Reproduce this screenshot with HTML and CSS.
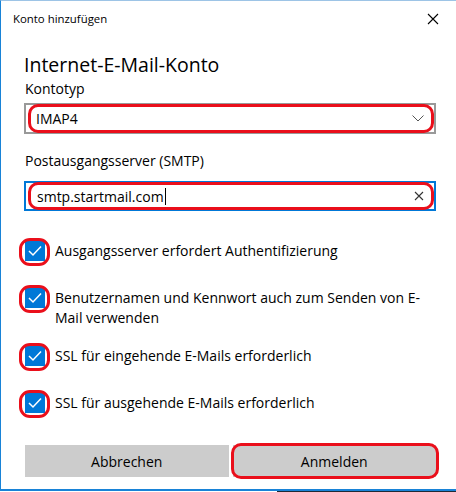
FILE: index.html
```html
<!DOCTYPE html>
<html lang="de">
<head>
  <meta charset="UTF-8">
  <title>Konto hinzufügen</title>
  <link rel="stylesheet" href="styles.css">
</head>
<body>

<div class="fenster">
  <header class="titelleiste">
    <span class="titel">Konto hinzufügen</span>
    <svg class="schliessen" width="12" height="12" viewBox="0 0 12 12">
      <path d="M1 1 L11 11 M11 1 L1 11" stroke="#000" stroke-width="1.1" fill="none"/>
    </svg>
  </header>

  <main class="inhalt">
    <h1>Internet-E-Mail-Konto</h1>
    <p class="label label-erst">Kontotyp</p>
    <div class="auswahl markiert">
      <span>IMAP4</span>
      <svg width="12" height="7" viewBox="0 0 12 7">
        <path d="M0.5 0.5 L6 6 L11.5 0.5" stroke="#555" stroke-width="1" fill="none"/>
      </svg>
    </div>

    <p class="label">Postausgangsserver (SMTP)</p>
    <div class="eingabe markiert">
      <span class="wert">smtp.startmail.com</span><span class="cursor"></span>
      <svg class="leeren" width="10" height="10" viewBox="0 0 10 10">
        <path d="M1 1 L9 9 M9 1 L1 9" stroke="#333" stroke-width="1.1" fill="none"/>
      </svg>
    </div>

    <div class="optionen">
      <div class="option">
        <span class="box markiert"><svg width="20" height="20" viewBox="0 0 20 20"><path d="M4 10 L8 14 L16 5.5" stroke="#fff" stroke-width="1.5" fill="none"/></svg></span>
        <span>Ausgangsserver erfordert Authentifizierung</span>
      </div>
      <div class="option zweizeilig">
        <span class="box markiert"><svg width="20" height="20" viewBox="0 0 20 20"><path d="M4 10 L8 14 L16 5.5" stroke="#fff" stroke-width="1.5" fill="none"/></svg></span>
        <span>Benutzernamen und Kennwort auch zum Senden von E-Mail verwenden</span>
      </div>
      <div class="option">
        <span class="box markiert"><svg width="20" height="20" viewBox="0 0 20 20"><path d="M4 10 L8 14 L16 5.5" stroke="#fff" stroke-width="1.5" fill="none"/></svg></span>
        <span>SSL für eingehende E-Mails erforderlich</span>
      </div>
      <div class="option">
        <span class="box markiert"><svg width="20" height="20" viewBox="0 0 20 20"><path d="M4 10 L8 14 L16 5.5" stroke="#fff" stroke-width="1.5" fill="none"/></svg></span>
        <span>SSL für ausgehende E-Mails erforderlich</span>
      </div>
    </div>

    <div class="knoepfe">
      <button>Abbrechen</button>
      <button class="markiert">Anmelden</button>
    </div>
  </main>
</div>

</body>
</html>
```

FILE: styles.css
```css
body {
  margin: 0;
  font-family: "Segoe UI", "Open Sans", sans-serif;
  color: #000;
  background: linear-gradient(to right, #fff 277px, #1f2a36 277px);
}

.fenster {
  height: 491px;
  box-sizing: border-box;
  background: #fff;
  border-top: 1px solid #9dc4e6;
  border-left: 1px solid #1883d7;
  border-bottom: 2px solid #1883d7;
}

.titelleiste {
  height: 35px;
  display: flex;
  align-items: center;
  justify-content: space-between;
  padding: 0 17px 0 12px;
}

.titel {
  font-size: 11.4px;
}

.inhalt {
  padding: 0 20px 0 23px;
}

h1 {
  font-size: 19.5px;
  font-weight: normal;
  line-height: 22px;
  margin: 18px 0 0;
}

.label {
  font-size: 14px;
  line-height: 20px;
  margin: 17px 0 0 1px;
}

.label-erst {
  margin-top: 3px;
}

.markiert {
  position: relative;
}

.markiert::after {
  content: "";
  position: absolute;
  inset: -1px 0 -1px 2px;
  border: 3px solid #ea0f1b;
  border-radius: 10px;
}

.auswahl {
  margin-top: 4px;
  height: 31px;
  box-sizing: border-box;
  border: 2px solid #999;
  display: flex;
  align-items: center;
  justify-content: space-between;
  padding: 0 10px 0 10px;
  font-size: 14px;
}

.eingabe {
  margin-top: 10px;
  height: 30px;
  box-sizing: border-box;
  border: 2px solid #0078d7;
  display: flex;
  align-items: center;
  padding: 0 10px 0 11px;
  font-size: 14px;
}

.cursor {
  width: 1px;
  height: 17px;
  background: #000;
  margin-left: 1px;
}

.leeren {
  margin-left: auto;
}

.optionen {
  margin-top: 30px;
}

.option {
  display: flex;
  align-items: flex-start;
  gap: 10px;
  font-size: 14px;
  line-height: 20px;
  padding-bottom: 27px;
}

.option.zweizeilig {
  padding-bottom: 18px;
}

.box {
  flex: none;
  width: 20px;
  height: 20px;
  margin-left: 1px;
  background: #0078d7;
}

.box svg {
  display: block;
}

.box.markiert::after {
  inset: -3px -5px -5px -6px;
  border-radius: 11px;
}

.knoepfe {
  display: grid;
  grid-template-columns: 1fr 1fr;
  gap: 4px;
  margin-top: 5px;
  padding-left: 1px;
}

button {
  height: 32px;
  border: none;
  background: #cccccc;
  font-family: inherit;
  font-size: 14px;
  color: #000;
}

button.markiert::after {
  inset: -2px -3px -2px -2px;
}
```
